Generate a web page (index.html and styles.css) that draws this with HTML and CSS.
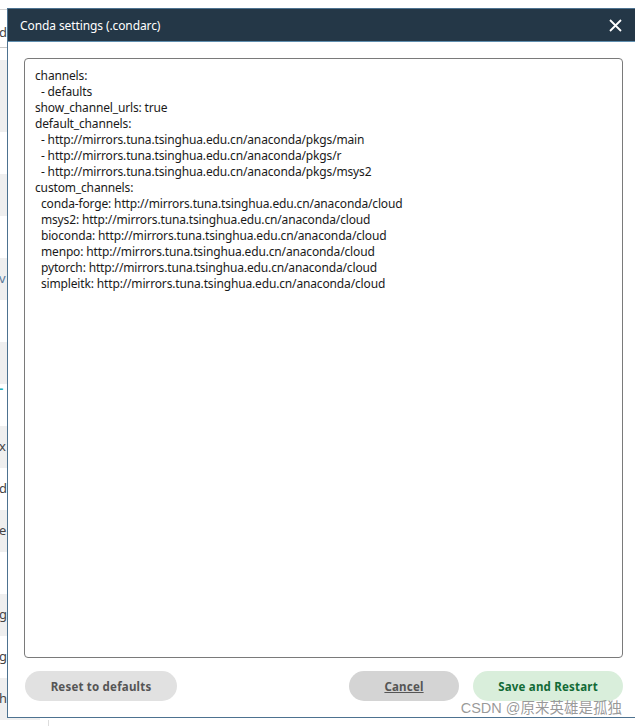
FILE: index.html
```html
<!DOCTYPE html>
<html>
<head>
<meta charset="utf-8">
<link rel="stylesheet" href="styles.css">
</head>
<body>
<div class="app">
  <div class="topbar"></div>
  <div class="head"><span class="frag">d</span></div>
  <div class="spacer"></div>
  <div class="row gray tall"></div>
  <div class="row"></div>
  <div class="row gray"></div>
  <div class="row"></div>
  <div class="row gray"><span class="frag blue">v</span></div>
  <div class="row"></div>
  <div class="row gray"></div>
  <div class="row"><span class="frag teal top">-</span></div>
  <div class="row gray"><span class="frag">x</span></div>
  <div class="row"><span class="frag">d</span></div>
  <div class="row gray"><span class="frag">e</span></div>
  <div class="row"></div>
  <div class="row gray"><span class="frag">g</span></div>
  <div class="row"><span class="frag">g</span></div>
  <div class="row gray"><span class="frag">h</span></div>
  <div class="tail"></div>
</div>

<div class="dialog">
  <div class="dialog-header">
    <span class="dialog-title">Conda settings (.condarc)</span>
    <svg class="close" width="13" height="13" viewBox="0 0 13 13"><path d="M1 1 L12 12 M12 1 L1 12" stroke="#fff" stroke-width="1.8" fill="none"/></svg>
  </div>
  <div class="dialog-body">
    <div class="editor">channels:
  - defaults
show_channel_urls: true
default_channels:
  - http://mirrors.tuna.tsinghua.edu.cn/anaconda/pkgs/main
  - http://mirrors.tuna.tsinghua.edu.cn/anaconda/pkgs/r
  - http://mirrors.tuna.tsinghua.edu.cn/anaconda/pkgs/msys2
custom_channels:
  conda-forge: http://mirrors.tuna.tsinghua.edu.cn/anaconda/cloud
  msys2: http://mirrors.tuna.tsinghua.edu.cn/anaconda/cloud
  bioconda: http://mirrors.tuna.tsinghua.edu.cn/anaconda/cloud
  menpo: http://mirrors.tuna.tsinghua.edu.cn/anaconda/cloud
  pytorch: http://mirrors.tuna.tsinghua.edu.cn/anaconda/cloud
  simpleitk: http://mirrors.tuna.tsinghua.edu.cn/anaconda/cloud</div>
    <div class="actions">
      <button class="btn btn-reset">Reset to defaults</button>
      <div class="actions-right">
        <button class="btn btn-cancel">Cancel</button>
        <button class="btn btn-save">Save and Restart</button>
      </div>
    </div>
  </div>
  <div class="watermark">CSDN @原来英雄是孤独</div>
</div>
</body>
</html>
```
FILE: styles.css
```css
html, body {
  margin: 0;
  padding: 0;
  background: #fff;
  width: 635px;
  height: 726px;
  overflow: hidden;
  font-family: "Noto Sans", "Open Sans", sans-serif;
}

.app {
  display: flex;
  flex-direction: column;
  width: 40px;
}
.topbar {
  height: 9px;
  border-bottom: 1px solid #d4d4d4;
}
.head {
  height: 37px;
  border-bottom: 1px solid #c8c8c8;
  position: relative;
}
.spacer { height: 12px; }
.row {
  height: 42px;
  position: relative;
}
.row.tall { height: 72px; }
.row.gray { background: #efefef; }
.tail {
  height: 10px;
  margin-left: 48px;
  border-left: 1px solid #ddd;
}
.frag {
  position: absolute;
  left: -1px;
  top: 50%;
  transform: translateY(-55%);
  font-size: 13px;
  color: #444;
}
.head .frag { top: 62%; }
.frag.blue { color: #5a7a9a; }
.frag.teal { color: #27b0b8; font-weight: bold; }
.frag.top { top: 12%; }

.dialog {
  position: absolute;
  left: 7px;
  top: 8px;
  right: -2px;
  bottom: 8px;
  border: 1px solid #4d7290;
  background: #fff;
  display: flex;
  flex-direction: column;
}
.dialog-header {
  height: 32px;
  background: #243747;
  border-bottom: 1px solid #5f8eaf;
  display: flex;
  align-items: center;
  justify-content: space-between;
  padding: 0 14px 0 12px;
}
.dialog-title {
  color: #fff;
  font-size: 12px;
  letter-spacing: -0.1px;
}
.close { display: block; margin-top: 1px; }

.dialog-body {
  flex: 1;
  display: flex;
  flex-direction: column;
  padding: 16px 13px 16px 16px;
}
.editor {
  flex: 1;
  border: 1px solid #7a7a7a;
  border-radius: 4px;
  padding: 9px 10px 5px;
  white-space: pre;
  font-size: 12px;
  line-height: 16px;
  color: #1a1a1a;
  letter-spacing: -0.15px;
}
.actions {
  margin-top: 13px;
  display: flex;
  justify-content: space-between;
  align-items: center;
}
.actions-right {
  display: flex;
  gap: 14px;
}
.btn {
  height: 30px;
  border: none;
  border-radius: 15px;
  font-family: "Noto Sans", "Open Sans", sans-serif;
  font-weight: bold;
  font-size: 11.5px;
  padding: 0;
  letter-spacing: 0.2px;
}
.btn-reset {
  width: 152px;
  margin-left: 1px;
  background: #e1e1e1;
  color: #555;
}
.btn-cancel {
  width: 110px;
  background: #d4d4d4;
  color: #555;
  text-decoration: underline;
}
.btn-save {
  width: 150px;
  background: #d9eedb;
  color: #116a36;
}
.watermark {
  position: absolute;
  right: 14px;
  bottom: 0px;
  font-family: "Liberation Sans", "Noto Sans CJK SC", sans-serif;
  font-size: 14.5px;
  color: rgba(120,120,120,0.75);
}
```
